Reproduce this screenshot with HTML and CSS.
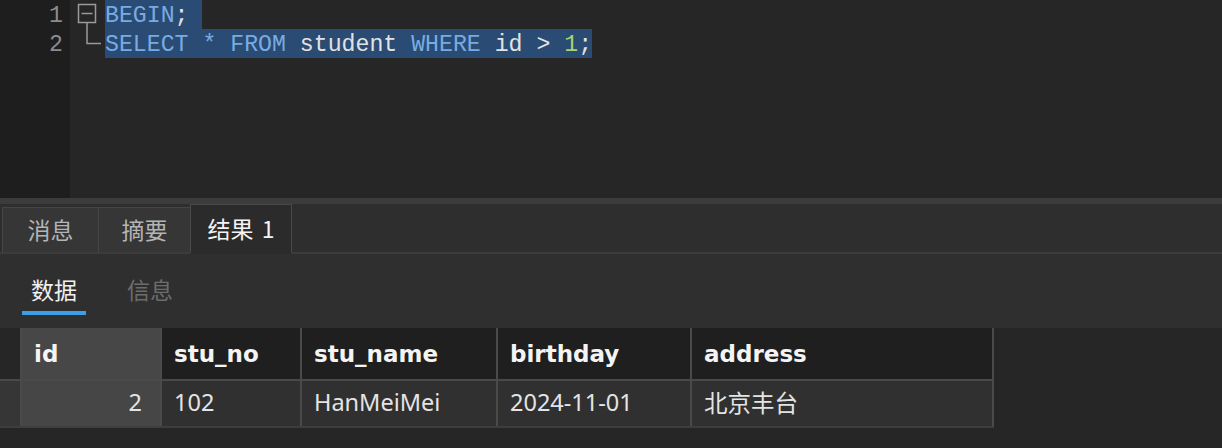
FILE: index.html
```html
<!DOCTYPE html>
<html lang="zh-CN">
<head>
<meta charset="utf-8">
<title>Query</title>
<link rel="stylesheet" href="styles.css">
</head>
<body>
<div class="app">
  <div class="editor">
    <div class="gutter">
      <div class="ln">1</div>
      <div class="ln">2</div>
    </div>
    <div class="fold">
      <svg width="35" height="58" viewBox="0 0 35 58">
        <rect x="8.5" y="4.5" width="17" height="18" fill="none" stroke="#9a9a9a" stroke-width="1.5"/>
        <line x1="11.5" y1="13.5" x2="22.5" y2="13.5" stroke="#9a9a9a" stroke-width="1.5"/>
        <polyline points="17,23 17,43.5 31,43.5" fill="none" stroke="#9a9a9a" stroke-width="1.5"/>
      </svg>
    </div>
    <div class="code">
      <div class="line"><span class="sel eol"><span class="kw">BEGIN</span>;</span></div>
      <div class="line"><span class="sel"><span class="kw">SELECT</span> <span class="kw">*</span> <span class="kw">FROM</span> student <span class="kw">WHERE</span> id &gt; <span class="num">1</span>;</span></div>
    </div>
  </div>
  <div class="divider"></div>
  <div class="tabbar">
    <div class="tab">消息</div>
    <div class="tab">摘要</div>
    <div class="tab active">结果 1</div>
  </div>
  <div class="subtabs">
    <div class="subtab current">数据</div>
    <div class="subtab">信息</div>
  </div>
  <div class="grid-area">
    <table class="grid">
      <thead>
        <tr>
          <th class="rowhead"></th>
          <th class="c-id sel-col">id</th>
          <th class="c-no">stu_no</th>
          <th class="c-name">stu_name</th>
          <th class="c-bd">birthday</th>
          <th class="c-addr">address</th>
        </tr>
      </thead>
      <tbody>
        <tr>
          <td class="rowhead"></td>
          <td class="sel-col num-cell">2</td>
          <td>102</td>
          <td>HanMeiMei</td>
          <td>2024-11-01</td>
          <td>北京丰台</td>
        </tr>
      </tbody>
    </table>
  </div>
</div>
</body>
</html>
```

FILE: styles.css
```css
* { box-sizing: border-box; }
html, body {
  margin: 0;
  padding: 0;
  background: #262626;
}
.app {
  width: 1222px;
  height: 448px;
  overflow: hidden;
  background: #262626;
  display: flex;
  flex-direction: column;
}
.editor {
  height: 198px;
  display: flex;
  flex-shrink: 0;
  background: #262626;
  font-family: "Liberation Mono", "DejaVu Sans Mono", monospace;
  font-size: 23.2px;
}
.gutter {
  width: 70px;
  background: #1e1e1e;
  padding-right: 7px;
  text-align: right;
  color: #8c8c8c;
}
.ln {
  height: 29px;
  line-height: 29px;
  padding-top: 2px;
}
.fold {
  width: 35px;
}
.fold svg { display: block; }
.code {
  flex: 1;
  color: #e2e2e2;
}
.line {
  height: 29px;
  line-height: 29px;
  white-space: pre;
}
.sel {
  display: inline-block;
  height: 29px;
  padding-top: 2px;
  vertical-align: top;
  background: #2a4b73;
}
.sel.eol { padding-right: 0.6em; }
.kw { color: #78abe2; }
.num { color: #a5d472; }
.divider {
  height: 6px;
  background: #3c3c3c;
  flex-shrink: 0;
}
.tabbar {
  height: 50px;
  flex-shrink: 0;
  display: flex;
  align-items: flex-end;
  padding-left: 2px;
  background: #2e2e2e;
  border-bottom: 2px solid #3c3c3c;
  font-family: "Noto Sans CJK SC", "Noto Sans", sans-serif;
  font-size: 23px;
}
.tab {
  height: 47px;
  margin-bottom: -2px;
  width: 97px;
  padding-bottom: 2px;
  background: #363636;
  border: 1px solid #454545;
  border-bottom: 2px solid #3c3c3c;
  color: #b4b4b4;
  display: flex;
  align-items: center;
  justify-content: center;
}
.tab + .tab { margin-left: -1px; }
.tab:nth-child(2) { width: 93px; }
.tab.active {
  height: 50px;
  width: 102px;
  background: #2b2b2b;
  border-color: #4a4a4a;
  border-bottom-color: #2b2b2b;
  color: #f4f4f4;
  word-spacing: 3px;
}
.subtabs {
  height: 74px;
  flex-shrink: 0;
  display: flex;
  gap: 32px;
  padding-left: 22px;
  background: #2f2f2f;
  font-family: "Noto Sans CJK SC", "Noto Sans", sans-serif;
  font-size: 23px;
}
.subtab {
  width: 64px;
  padding-top: 18px;
  height: 61px;
  text-align: center;
  color: #6c6c6c;
  line-height: 34px;
}
.subtab.current {
  color: #f0f0f0;
  border-bottom: 4px solid #3a9fe6;
}
.grid-area {
  flex: 1;
  background: #262626;
}
.grid {
  border-collapse: collapse;
  table-layout: fixed;
  font-family: "Noto Sans", "Noto Sans CJK SC", sans-serif;
  font-size: 23.5px;
  color: #e4e4e4;
}
.grid th, .grid td {
  border-right: 2px solid #4a4a4a;
  padding: 0 0 0 12px;
  text-align: left;
  white-space: nowrap;
}
.grid th {
  height: 52px;
  background: #1f1f1f;
  font-family: "DejaVu Sans", "Noto Sans", sans-serif;
  font-weight: bold;
  font-size: 23px;
  color: #f4f4f4;
  border-bottom: 2px solid #4a4a4a;
}
.grid td {
  height: 47px;
  padding-bottom: 3px;
  background: #303030;
  border-bottom: 2px solid #3e3e3e;
}
.grid .rowhead {
  width: 21px;
  padding: 0;
}
.grid th.rowhead { background: #262626; }
.grid td.rowhead { background: #363636; }
.grid .sel-col { background: #464646; }
.grid th.sel-col { background: #474747; }
.grid td.num-cell { text-align: right; padding-right: 18px; }
.c-id { width: 140px; }
.c-no { width: 140px; }
.c-name { width: 196px; }
.c-bd { width: 194px; }
.c-addr { width: 302px; }
```
